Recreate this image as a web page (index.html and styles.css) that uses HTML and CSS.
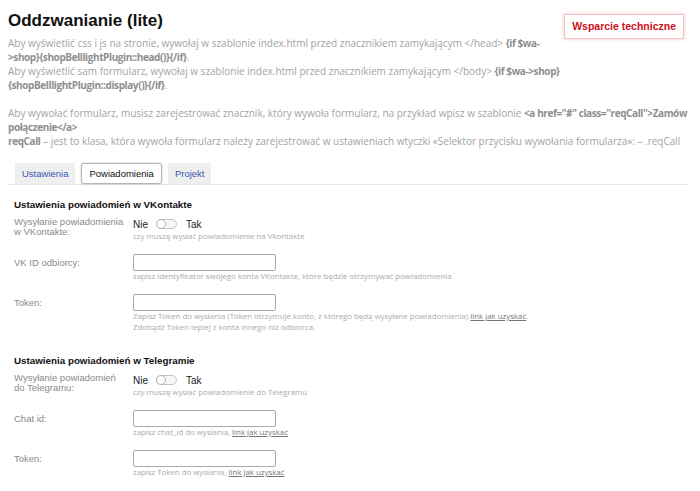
FILE: index.html
```html
<!DOCTYPE html>
<html lang="pl">
<head>
<meta charset="utf-8">
<title>Oddzwanianie (lite)</title>
<link rel="stylesheet" href="styles.css">
</head>
<body>
<div class="page">
  <a class="support" href="#">Wsparcie techniczne</a>
  <h1 class="title">Oddzwanianie (lite)</h1>
  <p class="intro">Aby wyświetlić css i js na stronie, wywołaj w szablonie index.html przed znacznikiem zamykającym &lt;/head&gt; <b>{if $wa-&gt;shop}{shopBelllightPlugin::head()}{/if}</b>.<br>Aby wyświetlić sam formularz, wywołaj w szablonie index.html przed znacznikiem zamykającym &lt;/body&gt; <b>{if $wa-&gt;shop}{shopBelllightPlugin::display()}{/if}</b>.<br><br>Aby wywołać formularz, musisz zarejestrować znacznik, który wywoła formularz, na przykład wpisz w szablonie <b>&lt;a href="#" class="reqCall"&gt;Zamów połączenie&lt;/a&gt;</b><br><b>reqCall</b> – jest to klasa, która wywoła formularz należy zarejestrować w ustawieniach wtyczki «Selektor przycisku wywołania formularza»: – .reqCall</p>

  <ul class="tabs">
    <li class="tab"><a href="#">Ustawienia</a></li>
    <li class="tab tab-active"><a href="#">Powiadomienia</a></li>
    <li class="tab"><a href="#">Projekt</a></li>
  </ul>

  <section class="group">
    <h2 class="group-title">Ustawienia powiadomień w VKontakte</h2>
    <div class="field">
      <div class="label">Wysyłanie powiadomienia<br>w VKontakte:</div>
      <div class="value">
        <div class="switch-row"><span>Nie</span><span class="switch"><span class="knob"></span></span><span>Tak</span></div>
        <div class="hint">czy muszę wysłać powiadomienie na Vkontakte</div>
      </div>
    </div>
    <div class="field">
      <div class="label label-input">VK ID odbiorcy:</div>
      <div class="value">
        <input class="text" type="text">
        <div class="hint">zapisz identyfikator swojego konta VKontakte, które będzie otrzymywać powiadomienia</div>
      </div>
    </div>
    <div class="field">
      <div class="label label-input">Token:</div>
      <div class="value">
        <input class="text" type="text">
        <div class="hint">Zapisz Token do wysłania (Token otrzymuje konto, z którego będą wysyłane powiadomienia) <a href="#">link jak uzyskać</a>.<br>Zdobądź Token lepiej z konta innego niż odbiorca.</div>
      </div>
    </div>
  </section>

  <section class="group">
    <h2 class="group-title">Ustawienia powiadomień w Telegramie</h2>
    <div class="field">
      <div class="label">Wysyłanie powiadomień<br>do Telegramu:</div>
      <div class="value">
        <div class="switch-row"><span>Nie</span><span class="switch"><span class="knob"></span></span><span>Tak</span></div>
        <div class="hint">czy muszę wysłać powiadomienie do Telegramu</div>
      </div>
    </div>
    <div class="field">
      <div class="label label-input">Chat id:</div>
      <div class="value">
        <input class="text" type="text">
        <div class="hint">zapisz chat_id do wysłania, <a href="#">link jak uzyskać</a></div>
      </div>
    </div>
    <div class="field">
      <div class="label label-input">Token:</div>
      <div class="value">
        <input class="text" type="text">
        <div class="hint">zapisz Token do wysłania, <a href="#">link jak uzyskać</a></div>
      </div>
    </div>
  </section>
</div>
</body>
</html>
```
FILE: styles.css
```css
* { box-sizing: border-box; }
html, body { margin: 0; padding: 0; background: #fff; }
body { font-family: "Liberation Sans", Arial, sans-serif; color: #000; }

.page { padding: 9px 12px 0 8px; }

.title {
  margin: 0;
  font-size: 17px;
  line-height: 24px;
  font-weight: bold;
  color: #111;
}

.support {
  float: right;
  margin: 5px 4px 4px 12px;
  padding: 0 7px;
  height: 25px;
  line-height: 23px;
  font-size: 10.5px;
  font-weight: bold;
  color: #d0101c;
  text-decoration: none;
  background: #fff;
  border: 1px solid #f2c4c6;
  box-shadow: 0 0 3px rgba(220, 60, 70, 0.35);
}

.intro {
  margin: 3px -10px 0 0;
  font-family: "Open Sans", "DejaVu Sans", sans-serif;
  font-size: 10px;
  line-height: 14px;
  color: #a3a3a3;
}
.intro b { color: #8e8e8e; font-weight: bold; letter-spacing: -0.4px; }

.tabs {
  clear: both;
  list-style: none;
  margin: 15px 0 0;
  padding: 0 0 0 7px;
  display: flex;
  gap: 6px;
  border-bottom: 1px solid #e6e6e6;
}
.tab a {
  display: block;
  height: 21px;
  line-height: 21px;
  padding: 0 7px;
  font-size: 9.5px;
  color: #3b55b5;
  text-decoration: none;
  background: #efefef;
}
.tab-active a {
  background: #fff;
  color: #111;
  border: 1px solid #b5b5b5;
  border-radius: 3px;
  line-height: 19px;
  box-shadow: 0 0 2px rgba(0,0,0,0.25);
}

.group { padding-left: 6px; margin-top: 12px; margin-bottom: 20px; }
.group-title {
  margin: 0 0 4px;
  font-size: 9.8px;
  line-height: 16px;
  font-weight: bold;
  color: #111;
}

.field {
  display: grid;
  grid-template-columns: 119px 1fr;
  margin-bottom: 12px;
}
.label {
  font-size: 9.5px;
  line-height: 10px;
  color: #8a8a8a;
  white-space: nowrap;
}
.label-input { padding-top: 4px; }

.switch-row {
  display: flex;
  align-items: center;
  height: 14px;
  font-size: 10px;
  color: #222;
}
.switch {
  position: relative;
  width: 21px;
  height: 10px;
  margin: 0 9px 0 8px;
  border: 1px solid #c4c4c4;
  border-radius: 5px;
  background: #f6f6f6;
}
.knob {
  position: absolute;
  left: -1px;
  top: -1px;
  width: 10px;
  height: 10px;
  border-radius: 50%;
  background: #fff;
  border: 1px solid #b0b0b0;
}

.text {
  display: block;
  width: 143px;
  height: 17px;
  margin: 0;
  padding: 0 3px;
  border: 1px solid #a9a9a9;
  border-radius: 2px;
  background: #fff;
}

.hint {
  font-family: "Open Sans", "DejaVu Sans", sans-serif;
  font-size: 7.85px;
  line-height: 11px;
  color: #ababab;
}
.hint a { color: #777; text-decoration: underline; }
```
